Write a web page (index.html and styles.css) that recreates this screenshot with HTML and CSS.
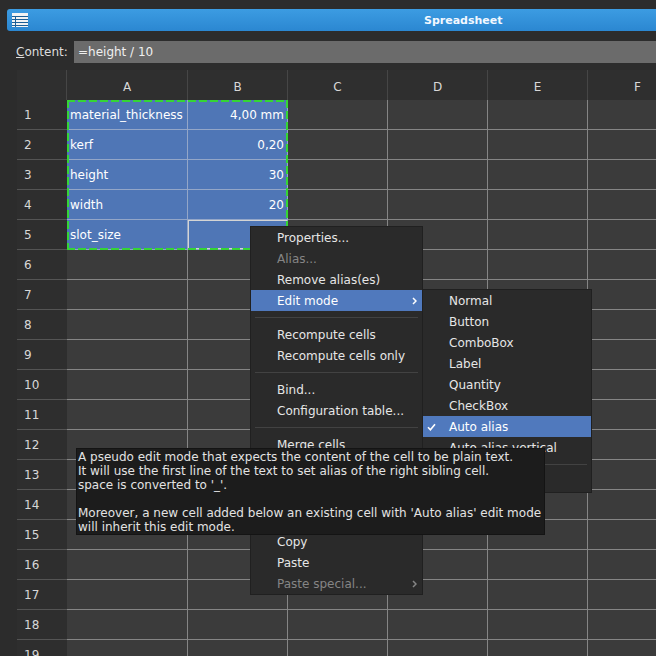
FILE: index.html
```html
<!DOCTYPE html>
<html>
<head>
<meta charset="utf-8">
<link rel="stylesheet" href="styles.css">
</head>
<body>
<div class="app">
  <div class="titlebar">
    <svg class="ticon" viewBox="0 0 16 14" width="16" height="14">
      <rect x="0" y="0" width="16" height="14" fill="#f3f3f3"/>
      <g stroke="#1d5f96" stroke-width="1">
        <line x1="0" y1="3.5" x2="16" y2="3.5"/>
        <line x1="0" y1="6.5" x2="16" y2="6.5"/>
        <line x1="0" y1="9.5" x2="16" y2="9.5"/>
        <line x1="0" y1="12.5" x2="16" y2="12.5"/>
        <line x1="3.5" y1="3" x2="3.5" y2="14"/>
      </g>
    </svg>
    <span class="title">Spreadsheet</span>
  </div>

  <div class="content-row">
    <span class="content-label"><u>C</u>ontent:</span>
    <div class="content-input">=height / 10</div>
  </div>

  <div class="sheet">
    <div class="corner"></div>
    <div class="colh">A</div><div class="colh">B</div><div class="colh">C</div><div class="colh">D</div><div class="colh">E</div><div class="colh">F</div>

    <div class="rowh">1</div><div class="cell sel">material_thickness</div><div class="cell sel num">4,00 mm</div><div class="cell"></div><div class="cell"></div><div class="cell"></div><div class="cell"></div>
    <div class="rowh">2</div><div class="cell sel">kerf</div><div class="cell sel num">0,20</div><div class="cell"></div><div class="cell"></div><div class="cell"></div><div class="cell"></div>
    <div class="rowh">3</div><div class="cell sel">height</div><div class="cell sel num">30</div><div class="cell"></div><div class="cell"></div><div class="cell"></div><div class="cell"></div>
    <div class="rowh">4</div><div class="cell sel">width</div><div class="cell sel num">20</div><div class="cell"></div><div class="cell"></div><div class="cell"></div><div class="cell"></div>
    <div class="rowh">5</div><div class="cell sel">slot_size</div><div class="cell sel num cur"></div><div class="cell"></div><div class="cell"></div><div class="cell"></div><div class="cell"></div>
    <div class="rowh">6</div><div class="cell"></div><div class="cell"></div><div class="cell"></div><div class="cell"></div><div class="cell"></div><div class="cell"></div>
    <div class="rowh">7</div><div class="cell"></div><div class="cell"></div><div class="cell"></div><div class="cell"></div><div class="cell"></div><div class="cell"></div>
    <div class="rowh">8</div><div class="cell"></div><div class="cell"></div><div class="cell"></div><div class="cell"></div><div class="cell"></div><div class="cell"></div>
    <div class="rowh">9</div><div class="cell"></div><div class="cell"></div><div class="cell"></div><div class="cell"></div><div class="cell"></div><div class="cell"></div>
    <div class="rowh">10</div><div class="cell"></div><div class="cell"></div><div class="cell"></div><div class="cell"></div><div class="cell"></div><div class="cell"></div>
    <div class="rowh">11</div><div class="cell"></div><div class="cell"></div><div class="cell"></div><div class="cell"></div><div class="cell"></div><div class="cell"></div>
    <div class="rowh">12</div><div class="cell"></div><div class="cell"></div><div class="cell"></div><div class="cell"></div><div class="cell"></div><div class="cell"></div>
    <div class="rowh">13</div><div class="cell"></div><div class="cell"></div><div class="cell"></div><div class="cell"></div><div class="cell"></div><div class="cell"></div>
    <div class="rowh">14</div><div class="cell"></div><div class="cell"></div><div class="cell"></div><div class="cell"></div><div class="cell"></div><div class="cell"></div>
    <div class="rowh">15</div><div class="cell"></div><div class="cell"></div><div class="cell"></div><div class="cell"></div><div class="cell"></div><div class="cell"></div>
    <div class="rowh">16</div><div class="cell"></div><div class="cell"></div><div class="cell"></div><div class="cell"></div><div class="cell"></div><div class="cell"></div>
    <div class="rowh">17</div><div class="cell"></div><div class="cell"></div><div class="cell"></div><div class="cell"></div><div class="cell"></div><div class="cell"></div>
    <div class="rowh">18</div><div class="cell"></div><div class="cell"></div><div class="cell"></div><div class="cell"></div><div class="cell"></div><div class="cell"></div>
    <div class="rowh">19</div><div class="cell"></div><div class="cell"></div><div class="cell"></div><div class="cell"></div><div class="cell"></div><div class="cell"></div>

    <div class="frame"></div>
  </div>

  <div class="menu">
    <div class="mi">Properties...</div>
    <div class="mi dis">Alias...</div>
    <div class="mi">Remove alias(es)</div>
    <div class="mi hl">Edit mode
      <svg class="arrow" width="5" height="8" viewBox="0 0 5 8"><path d="M1 1 L4 4 L1 7" stroke="currentColor" stroke-width="1.5" fill="none"/></svg>
    </div>
    <div class="sep"></div>
    <div class="mi">Recompute cells</div>
    <div class="mi">Recompute cells only</div>
    <div class="sep"></div>
    <div class="mi">Bind...</div>
    <div class="mi">Configuration table...</div>
    <div class="sep"></div>
    <div class="mi">Merge cells</div>
    <div class="mi">Split cells</div>
    <div class="sep"></div>
    <div class="mi">Delete</div>
    <div class="mi">Cut</div>
    <div class="mi">Copy</div>
    <div class="mi">Paste</div>
    <div class="mi dis">Paste special...
      <svg class="arrow" width="5" height="8" viewBox="0 0 5 8"><path d="M1 1 L4 4 L1 7" stroke="currentColor" stroke-width="1.5" fill="none"/></svg>
    </div>
  </div>

  <div class="submenu">
    <div class="mi">Normal</div>
    <div class="mi">Button</div>
    <div class="mi">ComboBox</div>
    <div class="mi">Label</div>
    <div class="mi">Quantity</div>
    <div class="mi">CheckBox</div>
    <div class="mi hl"><svg class="check" width="9" height="8" viewBox="0 0 9 8"><path d="M1 4.2 L3.4 6.8 L8 1.2" stroke="#ffffff" stroke-width="1.6" fill="none"/></svg>Auto alias</div>
    <div class="mi">Auto alias vertical</div>
    <div class="sep"></div>
    <div class="mi">Persistent</div>
  </div>

  <div class="tooltip">A pseudo edit mode that expects the content of the cell to be plain text.
It will use the first line of the text to set alias of the right sibling cell.
space is converted to '_'.

Moreover, a new cell added below an existing cell with 'Auto alias' edit mode
will inherit this edit mode.</div>
</div>
</body>
</html>
```

FILE: styles.css
```css
* {
  box-sizing: border-box;
}

html,
body {
  margin: 0;
  padding: 0;
}

body {
  width: 656px;
  height: 656px;
  overflow: hidden;
  background: #2c2c2c;
  font-family: "DejaVu Sans", sans-serif;
  font-size: 12px;
  color: #e2e2e2;
}

.app {
  position: relative;
  width: 656px;
  height: 656px;
  overflow: hidden;
  padding-top: 9px;
}

/* title bar */
.titlebar {
  margin-left: 7px;
  height: 22px;
  background: linear-gradient(#3c9ce2, #2b87d1);
  border-radius: 3px 0 0 3px;
  display: flex;
  align-items: center;
  padding-left: 5px;
}

.ticon {
  flex: none;
  display: block;
}

.title {
  margin-left: 396px;
  font-weight: bold;
  font-size: 11px;
  color: #f2f8ff;
  white-space: nowrap;
}

/* content row */
.content-row {
  display: flex;
  align-items: center;
  height: 22px;
  margin-top: 10px;
  padding-left: 16px;
}

.content-label {
  width: 58px;
  flex: none;
  color: #dcdcdc;
}

.content-input {
  flex: 1;
  height: 22px;
  line-height: 22px;
  background: #6b6b6b;
  color: #f0f0f0;
  padding-left: 4px;
}

/* sheet grid */
.sheet {
  position: relative;
  margin-top: 7px;
  margin-left: 17px;
  display: grid;
  grid-template-columns: 50px 121px repeat(5, 100px);
  grid-auto-rows: 30px;
  width: max-content;
}

.corner,
.colh {
  background: #2f2f2f;
  border-right: 1px solid #464646;
}

.colh {
  display: flex;
  align-items: center;
  justify-content: center;
  color: #d8d8d8;
  padding-top: 3px;
}

.rowh {
  background: #2e2e2e;
  border-bottom: 1px solid #545454;
  padding: 1px 0 0 7px;
  line-height: 28px;
  color: #d8d8d8;
}

.cell {
  background: #3b3b3b;
  border-right: 1px solid #858585;
  border-bottom: 1px solid #858585;
  padding: 1px 3px 0 3px;
  line-height: 28px;
  white-space: nowrap;
  overflow: hidden;
}

.cell.sel {
  background: #4f76b6;
  border-color: #93a6c8;
  color: #ffffff;
}

.cell.num {
  text-align: right;
}

.cell.cur {
  box-shadow: inset 0 0 0 1px #d4d4d4;
}

/* dashed selection frame: absolutely positioned within its grid area */
.frame {
  position: absolute;
  grid-row: 2 / 7;
  grid-column: 2 / 4;
  top: 0;
  left: 0;
  right: 0;
  bottom: 0;
  z-index: 1;
  background:
    repeating-linear-gradient(90deg, #35d535 0 8px, transparent 8px 11px) top left / 100% 2px no-repeat,
    repeating-linear-gradient(90deg, #35d535 0 8px, transparent 8px 11px) bottom left / 100% 2px no-repeat,
    repeating-linear-gradient(180deg, #35d535 0 8px, transparent 8px 11px) top left / 2px 100% no-repeat,
    repeating-linear-gradient(180deg, #35d535 0 8px, transparent 8px 11px) top right / 2px 100% no-repeat;
}

/* menus */
.menu,
.submenu {
  position: absolute;
  background: #2a2a2a;
  border: 1px solid #202020;
}

.menu {
  left: 250px;
  top: 226px;
  width: 173px;
  z-index: 5;
}

.submenu {
  left: 422px;
  top: 289px;
  width: 170px;
  z-index: 6;
}

.mi {
  position: relative;
  height: 21px;
  padding-left: 26px;
  display: flex;
  align-items: center;
  color: #e6e6e6;
  white-space: nowrap;
}

.mi.dis {
  color: #858585;
}

.mi.hl {
  background: #5079bd;
  color: #ffffff;
}

.arrow {
  margin-left: auto;
  margin-right: 5px;
  display: block;
}

.check {
  position: absolute;
  left: 4px;
  top: 7px;
  display: block;
}

.sep {
  height: 13px;
  display: flex;
  align-items: center;
  padding: 0 4px;
}

.sep::before {
  content: "";
  flex: 1;
  height: 1px;
  background: #424242;
}

/* tooltip */
.tooltip {
  position: absolute;
  left: 76px;
  top: 448px;
  width: 469px;
  background: #1c1c1c;
  border: 1px solid #141414;
  padding: 1px 1px 0 1px;
  line-height: 14px;
  white-space: pre;
  color: #e2e2e2;
  z-index: 10;
}
```
